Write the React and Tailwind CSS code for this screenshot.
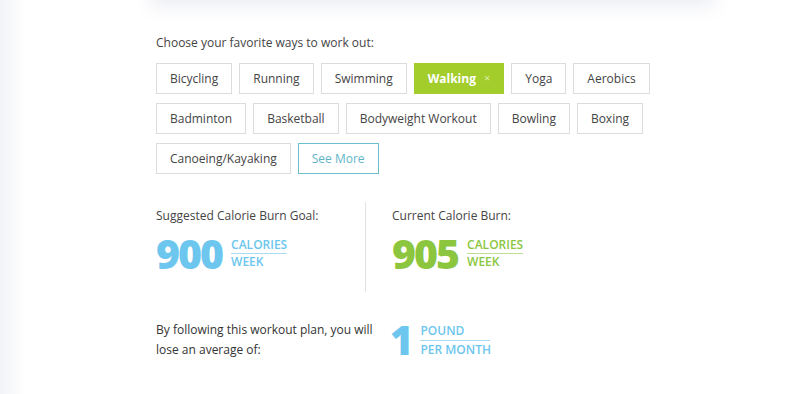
import React from "react";

const activities = [
  ["Bicycling", "Running", "Swimming", "Walking", "Yoga", "Aerobics"],
  ["Badminton", "Basketball", "Bodyweight Workout", "Bowling", "Boxing"],
  ["Canoeing/Kayaking"],
];

function Chip({ label, active }) {
  if (active) {
    return (
      <span className="inline-flex h-[31px] items-center gap-[8px] bg-[#a3cd2b] px-[14px] text-[12px] font-bold text-white">
        {label}
        <span className="text-[11px] font-normal text-[#dcefa8]">×</span>
      </span>
    );
  }
  return (
    <span className="inline-flex h-[31px] items-center border border-[#dcdcdc] bg-white px-[13px] text-[12px] text-[#444]">
      {label}
    </span>
  );
}

function Stat({ label, value, color, line }) {
  return (
    <div>
      <div className="text-[12px] text-[#444]">{label}</div>
      <div className="mt-[8px] flex items-center gap-[9px]">
        <span className={`text-[41px] font-extrabold leading-none tracking-[-2px] ${color}`}>{value}</span>
        <div className={`text-[12px] font-semibold leading-[14px] ${color}`}>
          <div className={`border-b pb-[1px] ${line}`}>CALORIES</div>
          <div className="pt-[1px]">WEEK</div>
        </div>
      </div>
    </div>
  );
}

export default function App() {
  return (
    <div className="relative h-[394px] w-[800px] overflow-hidden bg-white" style={{ fontFamily: '"Open Sans", Arial, sans-serif' }}>
      <div className="absolute inset-y-0 left-0 w-[26px] bg-gradient-to-r from-[#f3f4f7] to-white" />
      <div className="relative ml-[150px] w-[565px]">
        <div className="-mt-[60px] h-[60px] rounded-b-md bg-white shadow-[0_6px_18px_rgba(120,130,170,0.14)]" />
        <div className="ml-[6px] mt-[34px]">
          <div className="text-[12px] text-[#444]">Choose your favorite ways to work out:</div>
          <div className="mt-[11px] flex flex-col gap-[9px]">
            {activities.map((row, i) => (
              <div key={i} className="flex gap-[7px]">
                {row.map(a => (
                  <Chip key={a} label={a} active={a === "Walking"} />
                ))}
                {i === 2 && (
                  <span className="inline-flex h-[31px] items-center border border-[#6bbfcf] px-[13px] text-[12px] text-[#5fb5c8]">
                    See More
                  </span>
                )}
              </div>
            ))}
          </div>

          <div className="mt-[28px] flex">
            <div className="w-[210px] border-r border-[#e2e2e2] pb-[18px] pt-[5px]">
              <Stat label="Suggested Calorie Burn Goal:" value="900" color="text-[#6cc6ee]" line="border-[#a9dcf3]" />
            </div>
            <div className="pl-[26px] pt-[5px]">
              <Stat label="Current Calorie Burn:" value="905" color="text-[#8cc63f]" line="border-[#bfdf98]" />
            </div>
          </div>

          <div className="mt-[28px] flex items-center">
            <div className="w-[234px] text-[12px] leading-[20px] text-[#333]">
              By following this workout plan, you will lose an average of:
            </div>
            <span className="text-[40px] font-extrabold leading-none text-[#6cc6ee]">1</span>
            <div className="ml-[7px] text-[12px] font-semibold leading-[14px] text-[#6cc6ee]">
              <div className="w-[70px] border-b border-[#a9dcf3] pb-[2px]">POUND</div>
              <div className="pt-[2px]">PER MONTH</div>
            </div>
          </div>
        </div>
      </div>
    </div>
  );
}
